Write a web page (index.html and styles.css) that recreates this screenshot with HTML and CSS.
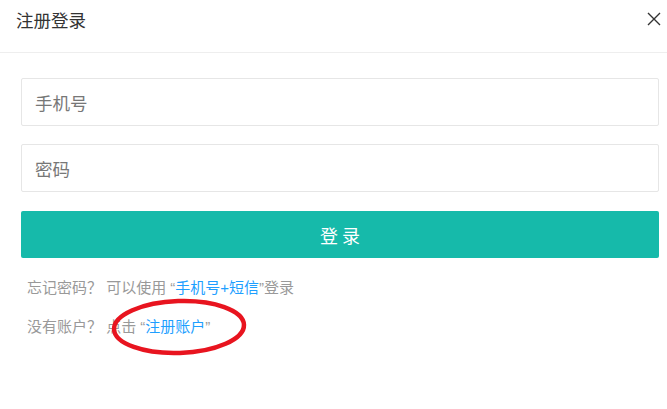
FILE: index.html
```html
<!DOCTYPE html>
<html lang="zh-CN">
<head>
<meta charset="utf-8">
<title>注册登录</title>
<link rel="stylesheet" href="styles.css">
</head>
<body>
<div class="dialog">
  <div class="header">
    <span class="title">注册登录</span>
    <button class="close" aria-label="关闭">
      <svg width="14" height="14" viewBox="0 0 14 14"><path d="M1 1L13 13M13 1L1 13" stroke="#333" stroke-width="1.4" fill="none"/></svg>
    </button>
  </div>
  <form class="form">
    <input class="field" type="text" placeholder="手机号">
    <input class="field" type="password" placeholder="密码">
    <button type="button" class="submit">登 录</button>
    <p class="tip">忘记密码？ 可以使用 “<a class="link" href="#">手机号+短信</a>”登录</p>
    <p class="tip tip-reg">没有账户？ 点击 “<a class="link" href="#">注册账户</a>”
      <svg class="mark" width="150" height="70" viewBox="0 0 150 70"><ellipse cx="75" cy="35" rx="65" ry="26" transform="rotate(-2 75 35)" fill="none" stroke="#e8141f" stroke-width="4.5"/></svg>
    </p>
  </form>
</div>
</body>
</html>
```

FILE: styles.css
```css
* { box-sizing: border-box; }
html, body { margin: 0; padding: 0; background: #fff; }
body { font-family: "Noto Sans CJK SC", "Microsoft YaHei", sans-serif; color: #333; }
.dialog { width: 667px; height: 409px; }
.header {
  height: 53px;
  border-bottom: 1px solid #eee;
  display: flex;
  justify-content: space-between;
  align-items: flex-start;
  padding: 0 5px 0 16px;
}
.title { font-size: 17.5px; line-height: 40px; color: #333; }
.close { border: 0; background: none; padding: 0; margin-top: 12px; width: 16px; height: 16px; cursor: pointer; }
.form { display: flex; flex-direction: column; padding: 25px 8px 0 21px; }
.field {
  height: 48px;
  border: 1px solid #e6e6e6;
  border-radius: 2px;
  padding: 0 13px;
  font-family: inherit;
  font-size: 17.5px;
  outline: none;
  margin-bottom: 18px;
}
.field::placeholder { color: #777; }
.submit {
  height: 47px;
  margin-top: 1px;
  border: 0;
  border-radius: 2px;
  background: #16baaa;
  color: #fff;
  font-family: inherit;
  font-size: 18px;
}
.tip {
  margin: 0;
  font-family: "Liberation Sans", "Noto Sans CJK SC", sans-serif;
  font-size: 15px;
  color: #999;
  padding-left: 6px;
  line-height: 20px;
}
.tip:first-of-type { margin-top: 20px; }
.tip-reg { margin-top: 19px; position: relative; }
.link { color: #1e9fff; text-decoration: none; }
.mark { position: absolute; left: 83px; top: -25px; }
```
